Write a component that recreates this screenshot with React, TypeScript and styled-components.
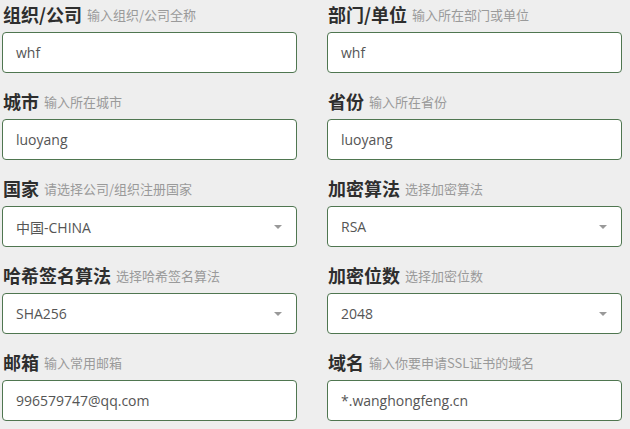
import React from "react";
import styled, { createGlobalStyle } from "styled-components";

const Global = createGlobalStyle`
  html, body { margin: 0; padding: 0; background: #eeeeee; }
  body { font-family: "Open Sans", "Noto Sans CJK SC", sans-serif; }
  * { box-sizing: border-box; }
`;

const Form = styled.div`
  display: grid;
  grid-template-columns: 295px 295px;
  align-content: start;
  column-gap: 30px;
  row-gap: 14px;
  padding-left: 2px;
  width: 630px;
  height: 429px;
  overflow: hidden;
`;

const Field = styled.div`
  display: flex;
  flex-direction: column;
`;

const LabelRow = styled.div`
  height: 32px;
  display: flex;
  align-items: flex-end;
  padding-bottom: 7px;
  padding-left: 1px;
  gap: 5px;
  white-space: nowrap;
`;

const Label = styled.span`
  font-family: "Noto Sans CJK SC", "Noto Sans", sans-serif;
  font-weight: 700;
  font-size: 18px;
  line-height: 22px;
  color: #2e2e2e;
`;

const Hint = styled.span`
  font-family: "Noto Sans CJK SC", "Noto Sans", sans-serif;
  font-size: 13px;
  line-height: 20px;
  color: #9a9a9a;
`;

const Box = styled.div`
  position: relative;
  height: 41px;
  background: #ffffff;
  border: 1px solid #4f7650;
  border-radius: 4px;
  display: flex;
  align-items: center;
  padding-left: 13px;
  font-family: "Open Sans", "Noto Sans CJK SC", sans-serif;
  font-size: 14px;
  color: #555555;
`;

const Caret = styled.svg`
  position: absolute;
  right: 14px;
  top: 50%;
  margin-top: -2px;
`;

type F = { label: string; hint: string; value: string; select?: boolean };

const fields: F[] = [
  { label: "组织/公司", hint: "输入组织/公司全称", value: "whf" },
  { label: "部门/单位", hint: "输入所在部门或单位", value: "whf" },
  { label: "城市", hint: "输入所在城市", value: "luoyang" },
  { label: "省份", hint: "输入所在省份", value: "luoyang" },
  { label: "国家", hint: "请选择公司/组织注册国家", value: "中国-CHINA", select: true },
  { label: "加密算法", hint: "选择加密算法", value: "RSA", select: true },
  { label: "哈希签名算法", hint: "选择哈希签名算法", value: "SHA256", select: true },
  { label: "加密位数", hint: "选择加密位数", value: "2048", select: true },
  { label: "邮箱", hint: "输入常用邮箱", value: "996579747@qq.com" },
  { label: "域名", hint: "输入你要申请SSL证书的域名", value: "*.wanghongfeng.cn" },
];

export default function App() {
  return (
    <>
      <Global />
      <Form>
        {fields.map((f, i) => (
          <Field key={i}>
            <LabelRow>
              <Label>{f.label}</Label>
              <Hint>{f.hint}</Hint>
            </LabelRow>
            <Box>
              {f.value}
              {f.select && (
                <Caret width="8" height="4" viewBox="0 0 8 4">
                  <path d="M0 0 L8 0 L4 4 Z" fill="#999999" />
                </Caret>
              )}
            </Box>
          </Field>
        ))}
      </Form>
    </>
  );
}
